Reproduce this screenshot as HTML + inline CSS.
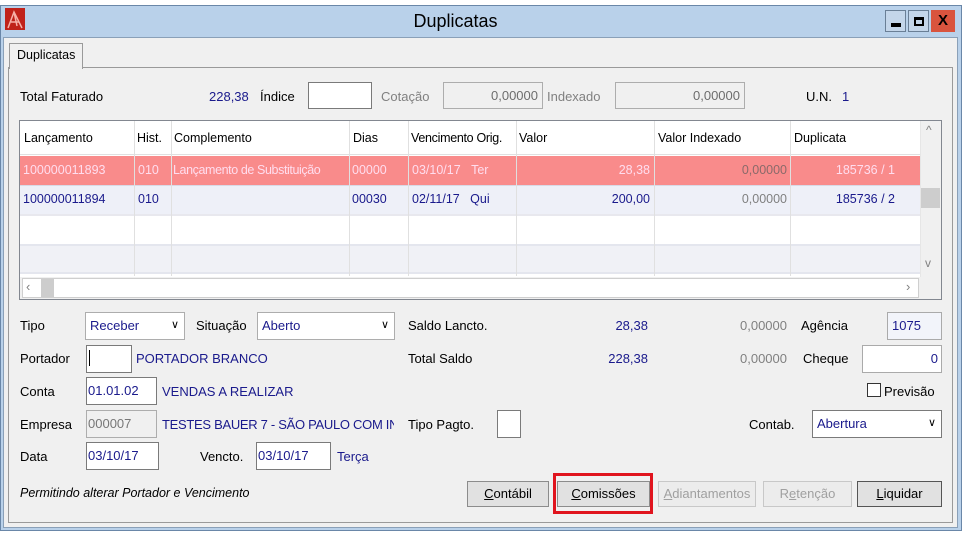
<!DOCTYPE html>
<html><head><meta charset="utf-8"><style>
*{box-sizing:border-box;margin:0;padding:0}
body{width:965px;height:533px;background:#fff;position:relative;overflow:hidden;font-family:"Liberation Sans",sans-serif;font-size:13px;color:#000}
.a{position:absolute;white-space:nowrap}
.b{color:#1a1a8c}
.g{color:#808080}
.box{position:absolute;background:#fff;border:1px solid #7a7a7a}
.sel{position:absolute;background:#fff;border:1px solid #adadad}
.btn{position:absolute;background:#e1e1e1;border:1px solid #8c8c8c;text-align:center;line-height:24px;height:26px;top:481px}
.cell{position:absolute;line-height:29px;white-space:nowrap;font-size:12.5px}
.vl{position:absolute;width:1px;background:#e0e0e0}
</style></head><body>
<div class="a" style="left:0;top:0;width:965px;height:6px;background:#fff"></div>
<div class="a" style="left:0;top:5px;width:962px;height:526px;background:#b9d1ea;border:1px solid #6a87a8"></div>
<svg class="a" style="left:5px;top:8px" width="20" height="22"><rect width="20" height="22" fill="#c0221a"/><path d="M3 20 L9 4 L17 20 M6 14 L14 14 M9 4 L12 18" stroke="#f6b0a8" stroke-width="1.5" fill="none"/></svg>
<div class="a" style="left:0;width:965px;top:11px;text-align:center;font-size:18px;"><span style="position:relative;left:-27px">Duplicatas</span></div>
<div class="a" style="left:885px;top:10px;width:21px;height:22px;border:1px solid #6a7f96;background:#c4d6ea"><div style="position:absolute;left:5px;top:12px;width:10px;height:4px;background:#000"></div></div>
<div class="a" style="left:908px;top:10px;width:21px;height:22px;border:1px solid #6a7f96;background:#c4d6ea"><div style="position:absolute;left:5px;top:6px;width:10px;height:9px;border:2px solid #000;border-top-width:3px"></div></div>
<div class="a" style="left:931px;top:10px;width:24px;height:22px;background:#d9543e;color:#000;font-weight:bold;font-size:15px;text-align:center;line-height:22px">X</div>
<div class="a" style="left:3px;top:37px;width:955px;height:491px;background:#f0f0f0;border:1px solid #8aa0b8"></div>
<div class="a" style="left:8px;top:67px;width:945px;height:456px;border:1px solid #9a9a9a;background:#f0f0f0"></div>
<div class="a" style="left:9px;top:43px;width:74px;height:26px;background:#f0f0f0;border:1px solid #9a9a9a;border-bottom:none;padding:4px 0 0 7px;font-size:12.5px">Duplicatas</div>

<div class="a" style="left:20px;top:89px">Total Faturado</div>
<div class="a b" style="left:209px;top:89px">228,38</div>
<div class="a" style="left:260px;top:89px">Índice</div>
<div class="box" style="left:308px;top:82px;width:64px;height:27px"></div>
<div class="a g" style="left:381px;top:89px">Cotação</div>
<div class="box" style="left:443px;top:82px;width:100px;height:27px;background:#f0f0f0;border-color:#adadad;text-align:right;padding:5px 4px;color:#6d6d6d">0,00000</div>
<div class="a g" style="left:547px;top:89px">Indexado</div>
<div class="box" style="left:615px;top:82px;width:130px;height:27px;background:#f0f0f0;border-color:#adadad;text-align:right;padding:5px 4px;color:#6d6d6d">0,00000</div>
<div class="a" style="left:806px;top:89px">U.N.</div>
<div class="a b" style="left:842px;top:89px">1</div>

<div class="a" style="left:19px;top:120px;width:923px;height:180px;border:1px solid #828790;background:#fff;overflow:hidden">
 <div class="a" style="left:0;top:35px;width:900px;height:29px;background:#f98b8b"></div>
 <div class="a" style="left:0;top:64px;width:900px;height:29px;background:#eef0f8"></div>
 <div class="a" style="left:0;top:64px;width:900px;height:1px;background:#d8dae6"></div>
 <div class="a" style="left:0;top:93px;width:900px;height:2px;background:#e8e8ee"></div>
 <div class="a" style="left:0;top:123px;width:900px;height:30px;background:#f0f1f6;border-top:2px solid #e4e6ee;border-bottom:2px solid #e4e6ee"></div>
 <div class="vl" style="left:114px;top:0;height:155px"></div><div class="vl" style="left:151px;top:0;height:155px"></div><div class="vl" style="left:329px;top:0;height:155px"></div><div class="vl" style="left:388px;top:0;height:155px"></div><div class="vl" style="left:496px;top:0;height:155px"></div><div class="vl" style="left:634px;top:0;height:155px"></div><div class="vl" style="left:770px;top:0;height:155px"></div>
 <div class="a" style="left:0;top:33px;width:900px;height:1px;background:#e0e0e0"></div>
 <div class="cell" style="left:4px;top:3px">Lançamento</div><div class="cell" style="left:117px;top:3px">Hist.</div><div class="cell" style="left:154px;top:3px">Complemento</div><div class="cell" style="left:333px;top:3px">Dias</div><div class="cell" style="left:391px;top:3px;letter-spacing:-0.3px">Vencimento Orig.</div><div class="cell" style="left:499px;top:3px">Valor</div><div class="cell" style="left:638px;top:3px">Valor Indexado</div><div class="cell" style="left:774px;top:3px">Duplicata</div>
 <div class="cell" style="left:3px;top:35px;color:#fde">100000011893</div><div class="cell" style="left:118px;top:35px;color:#fde">010</div><div class="cell" style="left:153px;top:35px;color:#fde;letter-spacing:-0.4px">Lançamento de Substituição</div><div class="cell" style="left:332px;top:35px;color:#fde">00000</div><div class="cell" style="left:392px;top:35px;color:#fde">03/10/17&nbsp;&nbsp;&nbsp;Ter</div><div class="cell" style="left:500px;top:35px;width:130px;text-align:right;color:#fde">28,38</div><div class="cell" style="left:640px;top:35px;width:127px;text-align:right;color:#8a6a6a">0,00000</div><div class="cell" style="left:775px;top:35px;width:100px;text-align:right;color:#fde">185736 / 1</div>
 <div class="cell b" style="left:3px;top:64px">100000011894</div><div class="cell b" style="left:118px;top:64px">010</div><div class="cell b" style="left:332px;top:64px">00030</div><div class="cell b" style="left:392px;top:64px">02/11/17&nbsp;&nbsp;&nbsp;Qui</div><div class="cell b" style="left:500px;top:64px;width:130px;text-align:right">200,00</div><div class="cell g" style="left:640px;top:64px;width:127px;text-align:right">0,00000</div><div class="cell b" style="left:775px;top:64px;width:100px;text-align:right">185736 / 2</div>
 <div class="a" style="left:900px;top:0;width:21px;height:156px;background:#f0f0f0;border-left:1px solid #e6e6e6"></div>
 <div class="a" style="left:901px;top:67px;width:19px;height:20px;background:#cdcdcd"></div>
 <div class="a g" style="left:906px;top:2px;font-size:12px">^</div>
 <div class="a g" style="left:905px;top:135px;font-size:12px">v</div>
 <div class="a" style="left:0;top:156px;width:921px;height:22px;background:#f0f0f0"></div>
 <div class="a" style="left:2px;top:157px;width:897px;height:20px;background:#fff;border:1px solid #cfcfcf"></div>
 <div class="a" style="left:21px;top:158px;width:13px;height:18px;background:#cdcdcd"></div>
 <div class="a g" style="left:6px;top:158px">‹</div><div class="a g" style="left:886px;top:158px">›</div>
</div>

<div class="a" style="left:20px;top:318px">Tipo</div>
<div class="sel" style="left:85px;top:312px;width:100px;height:28px;padding:5px 4px" ><span class="b">Receber</span><span style="position:absolute;right:5px;top:5px;font-size:11px">&#x2228;</span></div>
<div class="a" style="left:196px;top:318px">Situação</div>
<div class="sel" style="left:257px;top:312px;width:138px;height:28px;padding:5px 4px"><span class="b">Aberto</span><span style="position:absolute;right:5px;top:5px;font-size:11px">&#x2228;</span></div>
<div class="a" style="left:408px;top:318px">Saldo Lancto.</div>
<div class="a b" style="left:560px;top:318px;width:88px;text-align:right">28,38</div>
<div class="a g" style="left:700px;top:318px;width:87px;text-align:right">0,00000</div>
<div class="a" style="left:801px;top:318px">Agência</div>
<div class="box" style="left:887px;top:312px;width:55px;height:28px;background:#f2f4fa;border-color:#aaa;padding:5px 4px"><span class="b">1075</span></div>

<div class="a" style="left:20px;top:351px">Portador</div>
<div class="box" style="left:86px;top:345px;width:46px;height:28px"><div style="position:absolute;left:2px;top:4px;width:1px;height:16px;background:#000"></div></div>
<div class="a b" style="left:136px;top:351px">PORTADOR BRANCO</div>
<div class="a" style="left:408px;top:351px">Total Saldo</div>
<div class="a b" style="left:560px;top:351px;width:88px;text-align:right">228,38</div>
<div class="a g" style="left:700px;top:351px;width:87px;text-align:right">0,00000</div>
<div class="a" style="left:803px;top:351px">Cheque</div>
<div class="box" style="left:862px;top:345px;width:80px;height:28px;border-color:#aaa;text-align:right;padding:5px 3px"><span class="b">0</span></div>

<div class="a" style="left:20px;top:384px">Conta</div>
<div class="box" style="left:86px;top:377px;width:71px;height:28px;padding:5px 1px"><span class="b">01.01.02</span></div>
<div class="a b" style="left:162px;top:384px">VENDAS A REALIZAR</div>
<div class="a" style="left:867px;top:383px;width:14px;height:14px;border:1px solid #333;background:#fff"></div>
<div class="a" style="left:884px;top:384px">Previsão</div>

<div class="a" style="left:20px;top:417px">Empresa</div>
<div class="box" style="left:86px;top:410px;width:71px;height:28px;background:#f0f0f0;border-color:#adadad;padding:5px 1px;color:#777">000007</div>
<div class="a b" style="left:162px;top:417px;width:232px;overflow:hidden;letter-spacing:-0.3px">TESTES BAUER 7 - SÃO PAULO COM INDUSTRIA</div>
<div class="a" style="left:408px;top:417px">Tipo Pagto.</div>
<div class="box" style="left:497px;top:410px;width:24px;height:28px"></div>
<div class="a" style="left:749px;top:417px">Contab.</div>
<div class="sel" style="left:812px;top:410px;width:130px;height:28px;padding:5px 4px;border-color:#7a7a7a"><span class="b">Abertura</span><span style="position:absolute;right:5px;top:5px;font-size:11px">&#x2228;</span></div>

<div class="a" style="left:20px;top:449px">Data</div>
<div class="box" style="left:86px;top:442px;width:73px;height:28px;padding:5px 1px"><span class="b">03/10/17</span></div>
<div class="a" style="left:200px;top:449px">Vencto.</div>
<div class="box" style="left:256px;top:442px;width:75px;height:28px;padding:5px 1px"><span class="b">03/10/17</span></div>
<div class="a b" style="left:337px;top:449px">Terça</div>

<div class="a" style="left:20px;top:486px;font-style:italic;font-size:12.5px">Permitindo alterar Portador e Vencimento</div>
<div class="btn" style="left:467px;width:82px"><u>C</u>ontábil</div>
<div class="a" style="left:553px;top:473px;width:100px;height:41px;border:3px solid #e0141e"></div>
<div class="btn" style="left:557px;width:93px"><u>C</u>omissões</div>
<div class="btn" style="left:658px;width:98px;color:#a0a0a0;background:#ececec;border-color:#c8c8c8"><u>A</u>diantamentos</div>
<div class="btn" style="left:763px;width:89px;color:#a0a0a0;background:#ececec;border-color:#c8c8c8">R<u>e</u>tenção</div>
<div class="btn" style="left:857px;width:85px;border-color:#555"><u>L</u>iquidar</div>
</body></html>
